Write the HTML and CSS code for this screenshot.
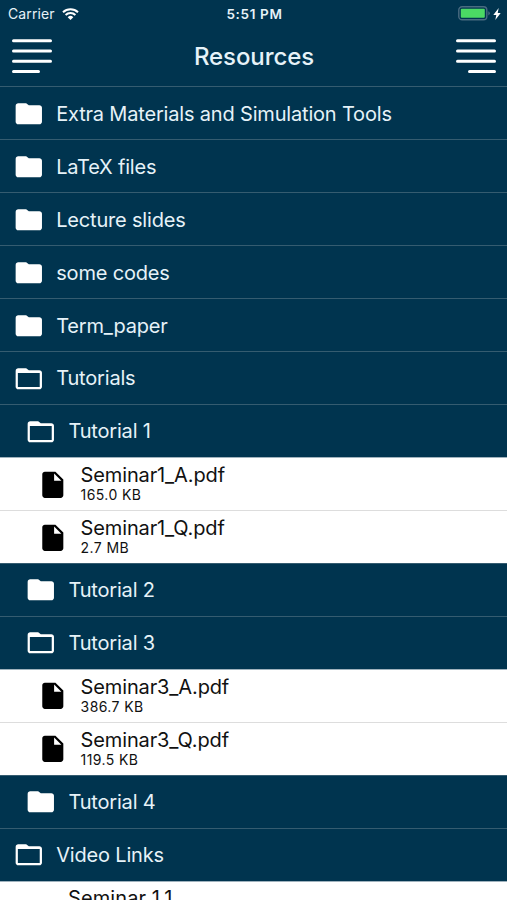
FILE: index.html
```html
<!DOCTYPE html>
<html lang="en">
<head>
<meta charset="utf-8">
<title>Resources</title>
<link rel="stylesheet" href="styles.css">
</head>
<body>
<svg class="defs" aria-hidden="true">
  <symbol id="folder" viewBox="0 0 24 24"><path d="M10 4H4c-1.100 0-1.990.9-1.990 2L2 18c0 1.100.9 2 2 2h16c1.100 0 2-.9 2-2V7.500c0-1.100-.9-2-2-2h-8L10 4z"/></symbol>
  <symbol id="open" viewBox="0 0 24 24"><path d="M20 5.500h-8L10 4H4c-1.100 0-1.990.9-1.990 2L2 18c0 1.100.9 2 2 2h16c1.100 0 2-.9 2-2V7.500c0-1.100-.9-2-2-2zm.3 12.800H3.700V7.600h16.600v10.700z"/></symbol>
  <symbol id="file" viewBox="0 0 24 24"><path d="M6 2c-1.100 0-1.990.9-1.990 2L4 20c0 1.100.89 2 1.990 2H18c1.100 0 2-.9 2-2V8l-6-6H6zm7 7V3.500L18.500 9H13z"/></symbol>
</svg>
<main class="screen">
  <header class="top">
    <div class="status">
      <div class="carrier"><span>Carrier</span>
        <svg class="wifi" viewBox="0 0 17 12"><path d="M1 4.300a10.800 10.800 0 0 1 15 0M3.600 7a7 7 0 0 1 9.800 0" fill="none" stroke="#fff" stroke-width="2"/><path d="M5.700 9.200a4 4 0 0 1 5.600 0L8.500 12z" fill="#fff"/></svg>
      </div>
      <div class="time">5:51 PM</div>
      <div class="power">
        <svg class="battery" viewBox="0 0 32 15"><rect x=".8" y=".8" width="28" height="13" rx="3.300" fill="none" stroke="#496b80" stroke-width="1.400"/><rect x="2.800" y="2.800" width="24" height="9" rx="1" fill="#4bd964"/><path d="M30.300 5.200q1.500.6 1.500 2.100t-1.500 2.100z" fill="#496b80"/></svg>
        <svg class="bolt" viewBox="0 0 8 12"><path d="M5.700 0L.3 6.900h3L2.300 12l5.400-7.100h-3z" fill="#fff"/></svg>
      </div>
    </div>
    <nav class="nav">
      <svg class="menu" viewBox="0 0 40 35"><path d="M1.500 1.700h37M1.500 11.900h37M1.500 22.200h37M1.500 32.400h25"/></svg>
      <h1 class="title">Resources</h1>
      <svg class="menu" viewBox="0 0 40 35"><path d="M1.500 1.700h37M1.500 11.900h37M1.500 22.200h37M13.500 32.400h25"/></svg>
    </nav>
  </header>
  <ul class="list">
    <li class="row"><svg class="icon"><use href="#folder"/></svg><span class="name">Extra Materials and Simulation Tools</span></li>
    <li class="row"><svg class="icon"><use href="#folder"/></svg><span class="name">LaTeX files</span></li>
    <li class="row"><svg class="icon"><use href="#folder"/></svg><span class="name">Lecture slides</span></li>
    <li class="row"><svg class="icon"><use href="#folder"/></svg><span class="name">some codes</span></li>
    <li class="row"><svg class="icon"><use href="#folder"/></svg><span class="name">Term_paper</span></li>
    <li class="row"><svg class="icon"><use href="#open"/></svg><span class="name">Tutorials</span></li>
    <li class="row nested"><svg class="icon"><use href="#open"/></svg><span class="name">Tutorial 1</span></li>
    <li class="row file"><svg class="icon"><use href="#file"/></svg><div class="info"><span class="name">Seminar1_A.pdf</span><span class="size">165.0 KB</span></div></li>
    <li class="row file"><svg class="icon"><use href="#file"/></svg><div class="info"><span class="name">Seminar1_Q.pdf</span><span class="size">2.7 MB</span></div></li>
    <li class="row nested"><svg class="icon"><use href="#folder"/></svg><span class="name">Tutorial 2</span></li>
    <li class="row nested"><svg class="icon"><use href="#open"/></svg><span class="name">Tutorial 3</span></li>
    <li class="row file"><svg class="icon"><use href="#file"/></svg><div class="info"><span class="name">Seminar3_A.pdf</span><span class="size">386.7 KB</span></div></li>
    <li class="row file"><svg class="icon"><use href="#file"/></svg><div class="info"><span class="name">Seminar3_Q.pdf</span><span class="size">119.5 KB</span></div></li>
    <li class="row nested"><svg class="icon"><use href="#folder"/></svg><span class="name">Tutorial 4</span></li>
    <li class="row"><svg class="icon"><use href="#open"/></svg><span class="name">Video Links</span></li>
    <li class="row link"><span class="name">Seminar 1.1</span></li>
  </ul>
</main>
</body>
</html>
```
FILE: styles.css
```css
* { box-sizing: border-box; }
body { margin: 0; font-family: Inter, "Liberation Sans", sans-serif; }
.defs { display: none; }
.screen { height: 900px; overflow: hidden; background: #00344f; color: #e6f2f8; }
.top { height: 86.45px; }
.status { display: grid; grid-template-columns: 1fr auto 1fr; align-items: center; height: 27px; padding: 0 6px 0 8px; }
.carrier { display: flex; align-items: center; gap: 7px; font-size: 14px; letter-spacing: 0.1px; }
.wifi { width: 17px; height: 12px; }
.time { font-size: 13.5px; font-weight: 600; letter-spacing: 0.65px; }
.power { display: flex; justify-content: flex-end; align-items: center; gap: 3px; }
.battery { width: 32px; height: 15px; }
.bolt { width: 8px; height: 12px; }
.nav { display: flex; justify-content: space-between; align-items: center; height: 59px; padding: 0 10.5px 0 11.5px; }
.menu { width: 40px; height: 35px; fill: none; stroke: #fff; stroke-width: 3; stroke-linecap: round; }
.title { margin: 0; font-size: 24px; font-weight: 500; line-height: 30px; letter-spacing: -0.1px; }
.list { margin: 0; padding: 0; list-style: none; }
.row { display: flex; align-items: center; height: 52.95px; padding: 0.8px 0 0 12.6px; border-top: 1px solid #355c70; }
.icon { flex: none; width: 31.6px; height: 31.6px; margin-right: 12px; fill: #fff; }
.name { font-size: 20px; line-height: 24px; letter-spacing: -0.18px; white-space: nowrap; }
.nested { padding-left: 24.8px; }
.file, .link { background: #fff; color: #111; border-top-color: #9fb2bd; }
.file { padding-left: 37px; }
.file + .file { border-top-color: #ddd; }
.file .icon { fill: #000; }
.info { display: flex; flex-direction: column; padding-bottom: 4px; }
.file .name { letter-spacing: -0.13px; }
.size { font-size: 14px; line-height: 15px; letter-spacing: 0.4px; }
.link { align-items: flex-start; padding: 4px 0 0 68px; }
.link .name { letter-spacing: 0.1px; }
```
